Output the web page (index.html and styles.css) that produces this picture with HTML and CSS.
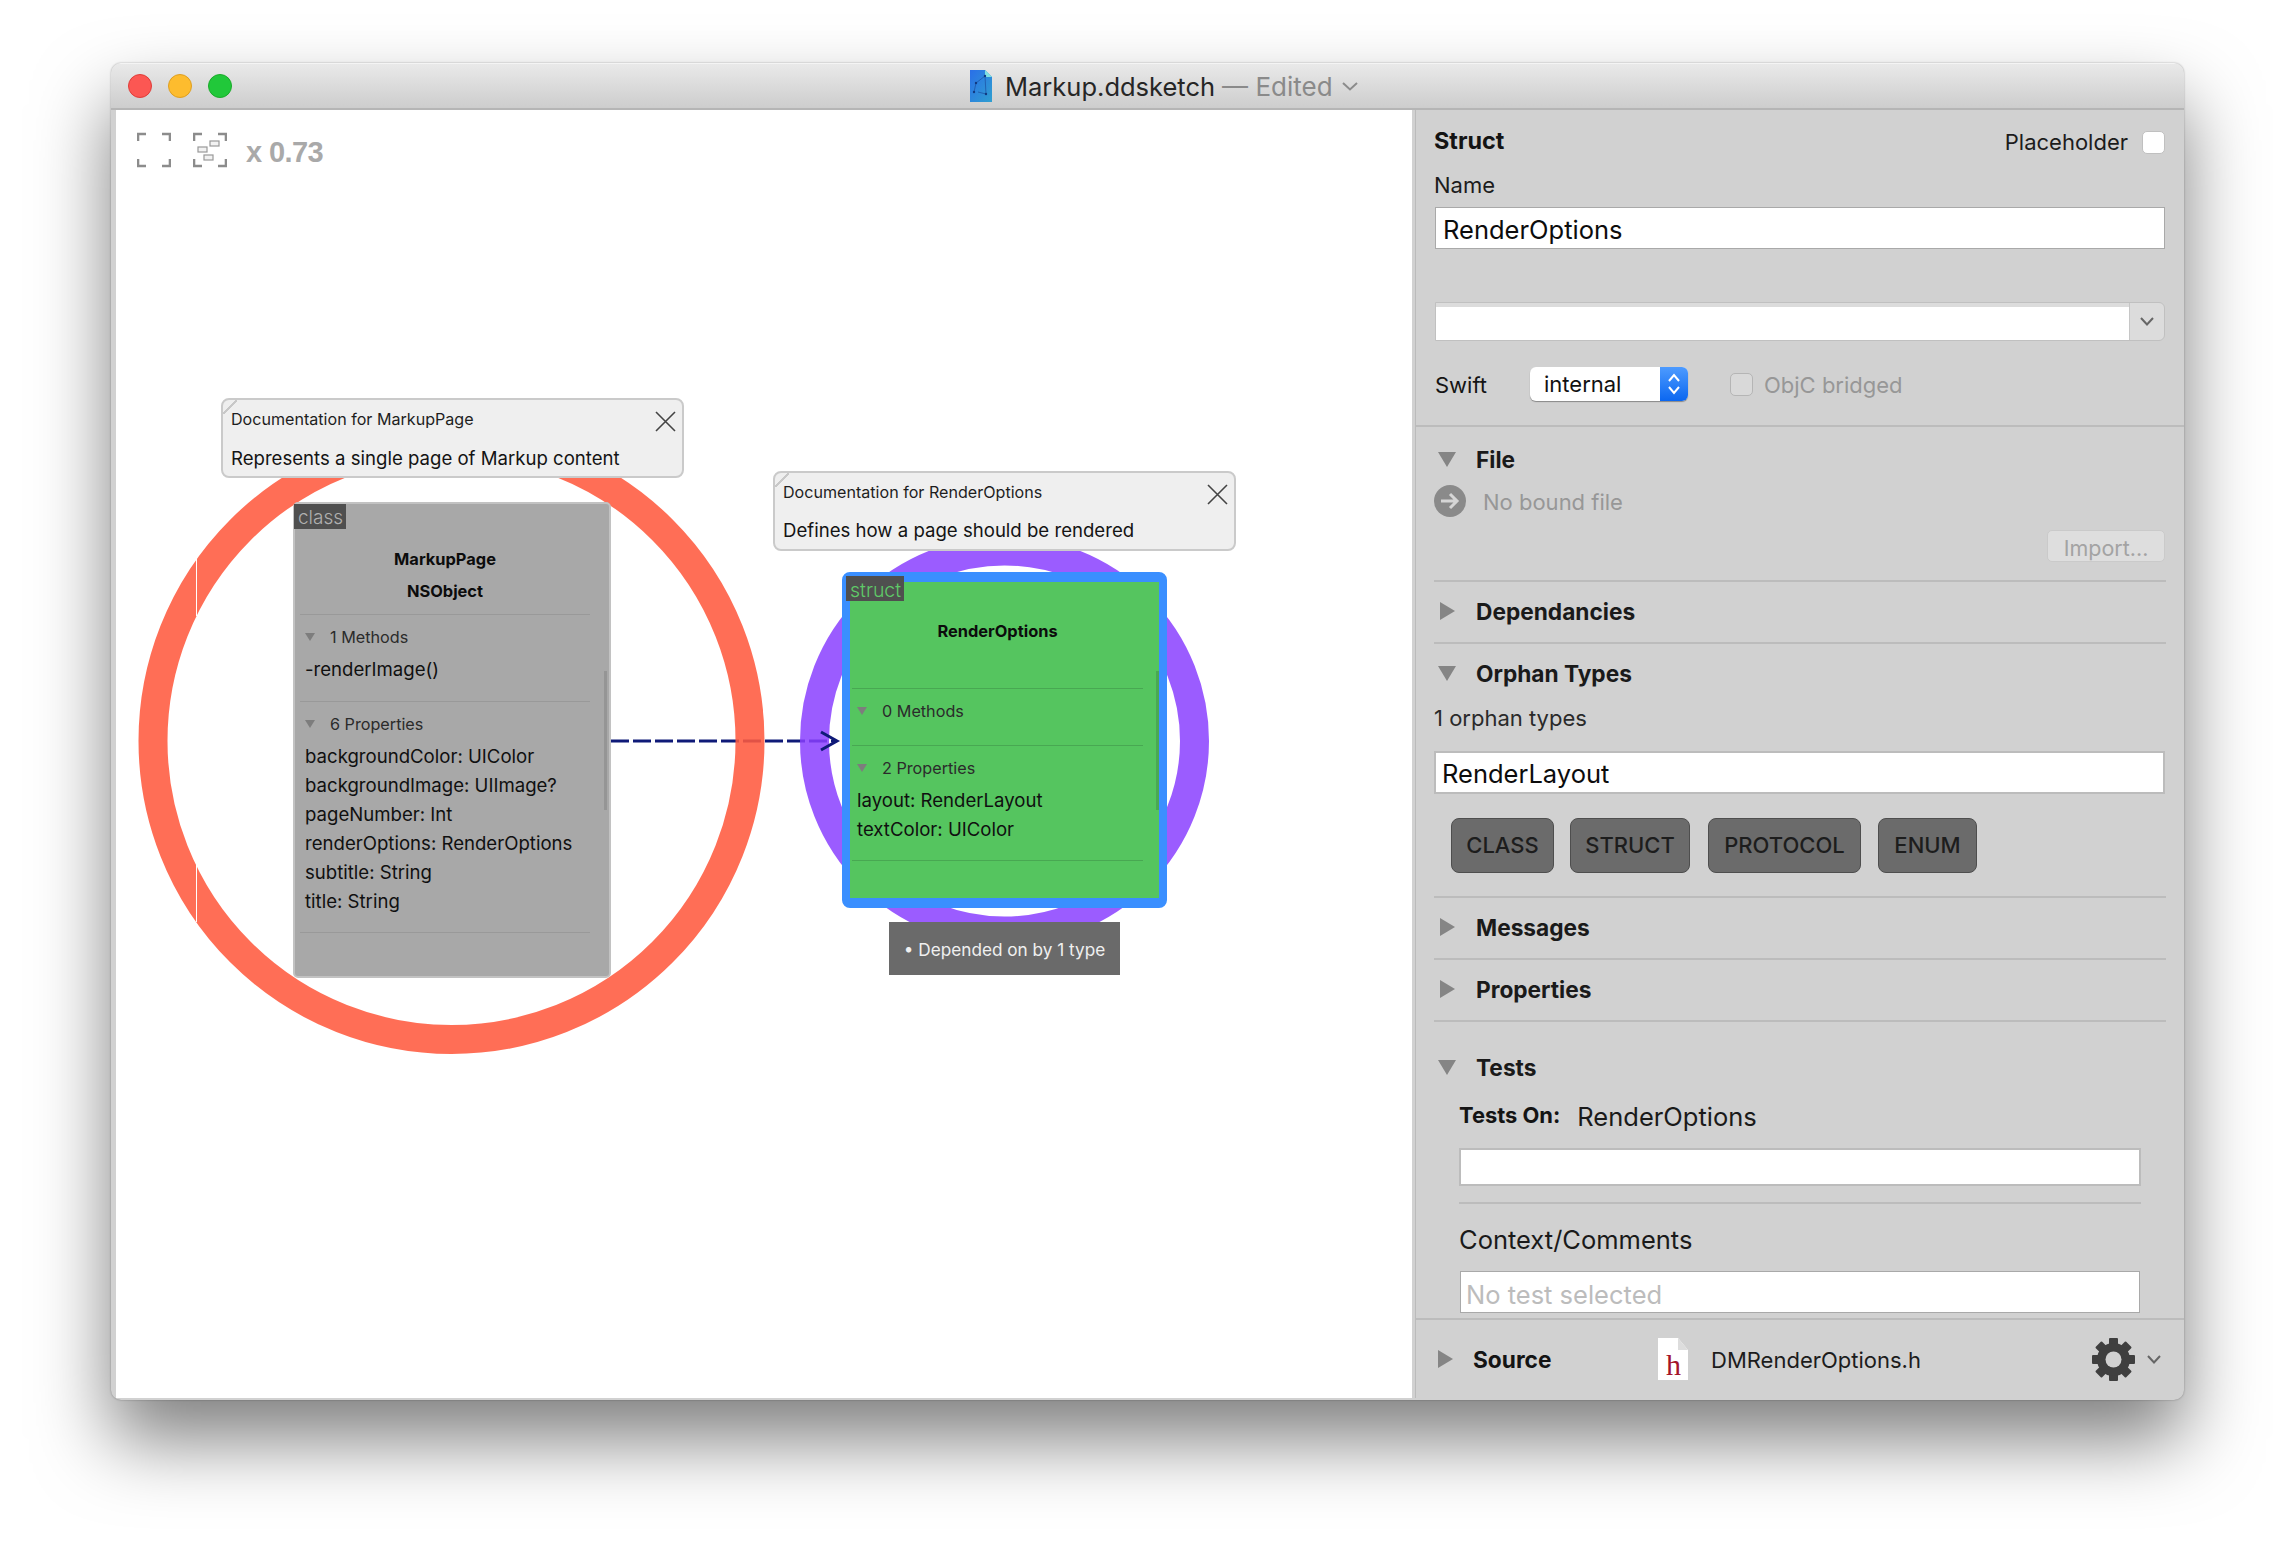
FILE: index.html
```html
<!DOCTYPE html>
<html lang="en">
<head>
    <meta charset="UTF-8">
    <title>Markup.ddsketch</title>
    <link rel="stylesheet" href="styles.css">
</head>
<body>
<div class="window">
    <div class="titlebar">
        <div class="lights">
            <span class="light red"></span>
            <span class="light yellow"></span>
            <span class="light green"></span>
        </div>
        <div class="doc-name">
            <svg class="doc-icon" width="22" height="32" viewBox="0 0 22 32">
                <defs>
                    <linearGradient id="sketch" x1="0" y1="0" x2="1" y2="1">
                        <stop offset="0" stop-color="#2a6fe8"/>
                        <stop offset="1" stop-color="#2f9fd0"/>
                    </linearGradient>
                </defs>
                <path d="M0 0H15L22 7V32H0Z" fill="url(#sketch)"/>
                <path d="M15 0L22 7H15Z" fill="#7fe0e0"/>
                <path d="M15 6L6 13L4 22M15 6L16 24L8 22" fill="none" stroke="#1b4fa0" stroke-width="0.7"/>
                <circle cx="15" cy="6" r="1.2" fill="#123a80"/>
                <circle cx="6" cy="13" r="1.2" fill="#123a80"/>
                <circle cx="4" cy="22" r="1.2" fill="#123a80"/>
                <circle cx="16" cy="24" r="1.2" fill="#123a80"/>
            </svg>
            <span class="doc-title-text">Markup.ddsketch</span>
            <span class="doc-edited">— Edited</span>
            <svg class="chev" width="16" height="9" viewBox="0 0 16 9"><path d="M1 1L8 7.5L15 1" fill="none" stroke="#8c8c8c" stroke-width="2"/></svg>
        </div>
    </div>

    <div class="main">
        <div class="canvas">
            <div class="toolbar">
                <svg width="34" height="36" viewBox="0 0 34 36" class="tool">
                    <path d="M1 9V2H9M25 2H33V9M33 27V34H25M9 34H1V27" fill="none" stroke="#8c8c8c" stroke-width="2.6"/>
                </svg>
                <svg width="34" height="36" viewBox="0 0 34 36" class="tool">
                    <path d="M1 9V2H9M25 2H33V9M33 27V34H25M9 34H1V27" fill="none" stroke="#8c8c8c" stroke-width="2.6"/>
                    <rect x="17" y="9" width="9" height="5" fill="#f2f2f2" stroke="#999" stroke-width="1.2"/>
                    <rect x="5" y="15" width="9" height="5" fill="#f2f2f2" stroke="#999" stroke-width="1.2"/>
                    <rect x="11" y="23" width="9" height="5" fill="#f2f2f2" stroke="#999" stroke-width="1.2"/>
                </svg>
                <span class="zoom-level">x 0.73</span>
            </div>

            <svg class="links" width="1296" height="1288" viewBox="0 0 1296 1288">
                <line x1="495" y1="631" x2="720" y2="631" class="link"/>
                <circle cx="335.5" cy="631" r="298.5" class="ring ring-red"/>
                <circle cx="888.5" cy="631" r="190" class="ring ring-purple"/>
                <rect x="80" y="447" width="1" height="59" fill="#fff"/>
                <rect x="80" y="754" width="1" height="58" fill="#fff"/>
                <path d="M705 622L721 631L705 640" class="link-head"/>
            </svg>

            <div class="node node-class">
                <span class="tag">class</span>
                <div class="node-title"><div>MarkupPage</div><div>NSObject</div></div>
                <div class="node-sec">
                    <div class="sec-head"><i class="tri-mini"></i>1 Methods</div>
                    <div class="member">-renderImage()</div>
                </div>
                <div class="node-sec last">
                    <div class="sec-head"><i class="tri-mini"></i>6 Properties</div>
                    <div class="member">backgroundColor: UIColor</div>
                    <div class="member">backgroundImage: UIImage?</div>
                    <div class="member">pageNumber: Int</div>
                    <div class="member">renderOptions: RenderOptions</div>
                    <div class="member">subtitle: String</div>
                    <div class="member">title: String</div>
                </div>
                <span class="node-scroll"></span>
            </div>

            <div class="node node-struct">
                <span class="tag">struct</span>
                <div class="node-title"><div>RenderOptions</div><div>&nbsp;</div></div>
                <div class="node-sec empty">
                    <div class="sec-head"><i class="tri-mini"></i>0 Methods</div>
                </div>
                <div class="node-sec last">
                    <div class="sec-head"><i class="tri-mini"></i>2 Properties</div>
                    <div class="member">layout: RenderLayout</div>
                    <div class="member">textColor: UIColor</div>
                </div>
                <span class="node-scroll"></span>
            </div>

            <div class="doc-note note-page">
                <div class="note-head">Documentation for MarkupPage</div>
                <div class="note-body">Represents a single page of Markup content</div>
                <svg class="note-close" width="21" height="21" viewBox="0 0 21 21"><path d="M1 1L20 20M20 1L1 20" stroke="#444" stroke-width="1.6"/></svg>
            </div>
            <div class="doc-note note-options">
                <div class="note-head">Documentation for RenderOptions</div>
                <div class="note-body">Defines how a page should be rendered</div>
                <svg class="note-close" width="21" height="21" viewBox="0 0 21 21"><path d="M1 1L20 20M20 1L1 20" stroke="#444" stroke-width="1.6"/></svg>
            </div>

            <div class="depends">• Depended on by 1 type</div>
        </div>

        <div class="inspector">
            <div class="head-block">
                <div class="struct-row">
                    <span class="label-bold struct-label">Struct</span>
                    <span class="placeholder-wrap">Placeholder <i class="check"></i></span>
                </div>
                <div class="label name-label">Name</div>
                <div class="field name-field">RenderOptions</div>
                <div class="combo"><div class="combo-text"></div><div class="combo-btn"><svg width="14" height="9" viewBox="0 0 14 9"><path d="M1 1L7 7.5L13 1" fill="none" stroke="#666" stroke-width="2"/></svg></div></div>
                <div class="swift-row">
                    <span class="label swift-label">Swift</span>
                    <div class="popup"><span class="popup-text">internal</span><span class="popup-btn"><svg width="14" height="24" viewBox="0 0 14 24"><path d="M2 9L7 3L12 9M2 15L7 21L12 15" fill="none" stroke="#fff" stroke-width="2"/></svg></span></div>
                    <i class="check disabled"></i>
                    <span class="label muted">ObjC bridged</span>
                </div>
            </div>

            <div class="section file-sec">
                <div class="sec-title"><i class="tri down"></i>File</div>
                <div class="bound-row">
                    <svg width="32" height="32" viewBox="0 0 32 32"><circle cx="16" cy="16" r="16" fill="#8a8a8a"/><path d="M7 16H23M16 9L23 16L16 23" fill="none" stroke="#d6d6d6" stroke-width="3"/></svg>
                    <span class="label muted">No bound file</span>
                </div>
                <div class="import-row"><span class="import-btn">Import...</span></div>
            </div>

            <div class="section"><div class="sec-title"><i class="tri right"></i>Dependancies</div></div>

            <div class="section orphan-sec">
                <div class="sec-title"><i class="tri down"></i>Orphan Types</div>
                <div class="label orphan-count">1 orphan types</div>
                <div class="field orphan-field">RenderLayout</div>
                <div class="type-btns">
                    <span class="type-btn btn-class">CLASS</span>
                    <span class="type-btn btn-struct">STRUCT</span>
                    <span class="type-btn btn-protocol">PROTOCOL</span>
                    <span class="type-btn btn-enum">ENUM</span>
                </div>
            </div>

            <div class="section"><div class="sec-title"><i class="tri right"></i>Messages</div></div>
            <div class="section"><div class="sec-title"><i class="tri right"></i>Properties</div></div>

            <div class="tests-sec">
                <div class="sec-title"><i class="tri down"></i>Tests</div>
                <div class="tests-body">
                    <div class="tests-on"><span class="label-bold small">Tests On:</span><span class="big-text">RenderOptions</span></div>
                    <div class="field tests-field"></div>
                    <div class="big-text context-label">Context/Comments</div>
                    <div class="comment-box">No test selected</div>
                </div>
            </div>

            <div class="source-bar">
                <i class="tri right"></i>
                <span class="label-bold source-label">Source</span>
                <svg class="h-icon" width="30" height="42" viewBox="0 0 30 42">
                    <path d="M0 0H20L30 12V42H0Z" fill="#fff"/>
                    <path d="M20 0L30 12H20Z" fill="#ddd"/>
                    <text x="8" y="37" class="h-letter">h</text>
                </svg>
                <span class="label source-file">DMRenderOptions.h</span>
                <svg class="gear" width="43" height="43" viewBox="0 0 43 43">
                    <g fill="#3f3f3f">
                        <rect x="17" y="0" width="9" height="43" rx="1"/>
                        <rect x="17" y="0" width="9" height="43" rx="1" transform="rotate(45 21.5 21.5)"/>
                        <rect x="17" y="0" width="9" height="43" rx="1" transform="rotate(90 21.5 21.5)"/>
                        <rect x="17" y="0" width="9" height="43" rx="1" transform="rotate(135 21.5 21.5)"/>
                    </g>
                    <circle cx="21.5" cy="21.5" r="12" fill="none" stroke="#3f3f3f" stroke-width="9"/>
                    <circle cx="21.5" cy="21.5" r="8" fill="#d1d1d1"/>
                </svg>
                <svg class="gear-chev" width="14" height="9" viewBox="0 0 14 9"><path d="M1 1L7 7.5L13 1" fill="none" stroke="#666" stroke-width="2"/></svg>
            </div>
        </div>
    </div>
</div>
</body>
</html>
```

FILE: styles.css
```css
* {
    box-sizing: border-box;
}
html, body {
    margin: 0;
    height: 1560px;
    overflow: hidden;
}
body {
    background: #fff;
    padding: 63px 0 0 111px;
    font-family: "Inter", "Liberation Sans", sans-serif;
    color: #1c1c1c;
}
i {
    font-style: normal;
}

.window {
    width: 2073px;
    height: 1337px;
    background: #d1d1d1;
    border-radius: 10px;
    overflow: hidden;
    box-shadow: 0 0 2px rgba(0, 0, 0, .35), 0 40px 75px rgba(0, 0, 0, .5);
}

/* title bar */
.titlebar {
    height: 47px;
    display: flex;
    align-items: center;
    padding-left: 17px;
    background: linear-gradient(#e9e9e9, #cdcdcd);
    border-top: 1px solid #f4f4f4;
    border-bottom: 2px solid #b5b5b5;
}
.lights {
    display: flex;
    gap: 16px;
}
.light {
    width: 24px;
    height: 24px;
    border-radius: 50%;
}
.red { background: #fc5753; border: 1px solid #df3d39; }
.yellow { background: #fdbc2e; border: 1px solid #de9f21; }
.green { background: #21c83a; border: 1px solid #1aab2a; }
.doc-name {
    display: flex;
    align-items: center;
    margin-left: 738px;
    font-size: 25.5px;
}
.doc-icon {
    margin-right: 13px;
}
.doc-title-text {
    color: #262626;
}
.doc-edited {
    color: #8a8a8a;
    margin-left: 7px;
    font-size: 26px;
}
.chev {
    margin-left: 9px;
}

.main {
    display: flex;
    height: 1288px;
    padding-left: 5px;
}

/* diagram */
.canvas {
    position: relative;
    width: 1296px;
    background: #fff;
    padding: 22px 0 0 21px;
}
.toolbar {
    display: flex;
    align-items: center;
    gap: 22px;
    height: 36px;
}
.zoom-level {
    margin: 5px 0 0 -3px;
    font-family: "Liberation Sans", sans-serif;
    font-size: 29px;
    font-weight: 700;
    letter-spacing: -.6px;
    color: #a9a9a9;
}
.links {
    position: absolute;
    left: 0;
    top: 0;
}
.link {
    stroke: #0f1a78;
    stroke-width: 3;
    stroke-dasharray: 18 4;
}
.link-head {
    fill: none;
    stroke: #0f1a78;
    stroke-width: 3;
}
.ring {
    fill: none;
    stroke-width: 29;
}
.ring-red {
    stroke: #ff5a3f;
    stroke-opacity: .88;
}
.ring-purple {
    stroke: #8a40ff;
    stroke-opacity: .85;
}

.node {
    position: absolute;
    font-size: 18.6px;
}
.node-class {
    left: 177px;
    top: 392px;
    width: 318px;
    height: 476px;
    padding: 39px 19px 0 5px;
    background: #a8a8a8;
    border: 2px solid #c2c2c2;
    border-radius: 5px;
    --sep: #999;
}
.node-struct {
    left: 726px;
    top: 462px;
    width: 325px;
    height: 336px;
    padding: 33px 16px 0 2px;
    background: #55c55f;
    border: solid #3a8fff;
    border-width: 10px 8px;
    border-radius: 8px;
    --sep: #48a852;
}
.tag {
    position: absolute;
    left: -1px;
    top: 0;
    height: 25px;
    padding: 0 3px 0 4px;
    line-height: 27px;
    font-size: 19px;
    font-weight: 300;
    background: #4f4f4f;
    color: #b0b0b0;
}
.node-struct .tag {
    left: -4px;
    top: -6px;
    font-size: 19.5px;
    line-height: 28px;
    color: #5fca68;
}
.node-title {
    padding-bottom: 7px;
    text-align: center;
    line-height: 32px;
    font-size: 16.4px;
    font-weight: 700;
    color: #0c0c0c;
}
.node-struct .node-title {
    padding-bottom: 9px;
}
.node-sec {
    border-top: 1px solid var(--sep);
    padding: 9px 0 17.5px 5px;
}
.node-sec.empty {
    padding-bottom: 21px;
}
.node-sec.last {
    border-bottom: 1px solid var(--sep);
    padding-bottom: 16.5px;
}
.sec-head {
    display: flex;
    align-items: center;
    height: 26px;
    font-size: 16.2px;
    color: #2b2b2b;
}
.tri-mini {
    width: 0;
    height: 0;
    margin-right: 15px;
    border: solid transparent;
    border-width: 8px 5px 0;
    border-top-color: #7d7d7d;
}
.member {
    height: 29px;
    line-height: 29px;
    color: #101010;
}
.sec-head + .member {
    margin-top: 4.5px;
}
.node-scroll {
    position: absolute;
    left: 309px;
    top: 167px;
    width: 3px;
    height: 139px;
    background: #959595;
}
.node-struct .node-scroll {
    left: 306px;
    top: 89px;
    width: 2.5px;
    background: #4aa853;
}

.doc-note {
    position: absolute;
    width: 463px;
    height: 80px;
    padding: 7px 0 0 8px;
    background: #efefef;
    border: 2px solid #cacaca;
    border-radius: 8px;
}
.doc-note::before {
    content: "";
    position: absolute;
    left: 0;
    top: 0;
    width: 14px;
    height: 14px;
    background: linear-gradient(135deg, transparent 46%, #c8c8c8 46%, #c8c8c8 54%, transparent 54%);
}
.note-page {
    left: 105px;
    top: 288px;
}
.note-options {
    left: 657px;
    top: 361px;
}
.note-head {
    height: 24px;
    line-height: 24px;
    font-size: 16.1px;
    color: #1e1e1e;
}
.note-body {
    margin-top: 14px;
    height: 26px;
    line-height: 26px;
    font-size: 18.6px;
    color: #141414;
}
.note-options .note-body {
    margin-top: 13px;
}
.note-close {
    position: absolute;
    right: 6px;
    top: 11px;
}
.depends {
    position: absolute;
    left: 773px;
    top: 812px;
    width: 231px;
    height: 53px;
    text-align: center;
    line-height: 55px;
    font-size: 17.2px;
    background: #6a6a6a;
    color: #f0f0f0;
}

/* inspector */
.inspector {
    width: 769px;
    margin-left: 3px;
    border-left: 1px solid #bbb;
    font-size: 22px;
}
.label {
    height: 24px;
    padding-top: 1px;
    font-size: 22px;
    line-height: 24px;
}
.label-bold {
    font-size: 22.7px;
    line-height: 24px;
    font-weight: 700;
    color: #141414;
}
.label-bold.small {
    font-size: 21.9px;
}
.struct-label {
    font-size: 23.4px;
    margin-top: -2px;
}
.muted {
    color: #979797;
}
.head-block {
    height: 317px;
    padding: 20px 19px 0 18px;
    border-bottom: 2px solid #bcbcbc;
}
.struct-row {
    display: flex;
    justify-content: space-between;
    align-items: center;
    height: 24px;
}
.placeholder-wrap {
    display: flex;
    align-items: center;
    gap: 14px;
    font-size: 22px;
}
.check {
    display: block;
    width: 23px;
    height: 23px;
    background: #fff;
    border: 1px solid #c0c0c0;
    border-radius: 5px;
}
.check.disabled {
    background: #d9d9d9;
    border-color: #b5b5b5;
    margin: 0 11px 0 42px;
}
.name-label {
    margin-top: 18px;
}
.field {
    display: flex;
    align-items: center;
    padding: 2px 0 0 7px;
    background: #fff;
    font-size: 25.5px;
    color: #0c0c0c;
}
.name-field {
    height: 42px;
    margin: 11px 0 0 1px;
    border: 1px solid #a9a9a9;
}
.combo {
    display: flex;
    height: 39px;
    margin: 53px 0 0 1px;
    border: 1px solid #c0c0c0;
    border-radius: 0 6px 6px 0;
    background: #dcdcdc;
}
.combo-text {
    flex: 1;
    margin-top: 4px;
    background: #fff;
}
.combo-btn {
    display: flex;
    align-items: center;
    justify-content: center;
    width: 35px;
    border-left: 1px solid #c6c6c6;
}
.swift-row {
    display: flex;
    align-items: center;
    height: 34px;
    margin: 26px 0 0 1px;
}
.swift-label {
    width: 95px;
    color: #141414;
}
.popup {
    display: flex;
    width: 158px;
    height: 34px;
    background: #fff;
    border-radius: 6px;
    box-shadow: 0 1px 1px rgba(0, 0, 0, .35);
    overflow: hidden;
}
.popup-text {
    flex: 1;
    padding-left: 14px;
    line-height: 35px;
    font-size: 22px;
    color: #111;
}
.popup-btn {
    display: flex;
    align-items: center;
    justify-content: center;
    width: 28px;
    background: linear-gradient(#4d9bff, #0b67f0);
}

.section {
    margin: 0 18px;
    padding: 17px 0 19px;
    border-bottom: 2px solid #bcbcbc;
}
.sec-title {
    display: flex;
    align-items: center;
    height: 24px;
    padding-top: 1px;
    font-size: 22.7px;
    font-weight: 700;
    color: #1a1a1a;
}
.sec-title .tri {
    margin-top: -1px;
}
.tri {
    display: block;
    flex: none;
    width: 0;
    height: 0;
    border: solid transparent;
}
.tri.down {
    margin-left: 4px;
    margin-right: 20px;
    border-width: 15px 9px 0;
    border-top-color: #858585;
}
.tri.right {
    margin-left: 6px;
    margin-right: 21px;
    border-width: 9px 0 9px 15px;
    border-left-color: #858585;
}
.file-sec {
    padding: 20px 0 18px;
}
.bound-row {
    display: flex;
    align-items: center;
    gap: 17px;
    height: 32px;
    margin-top: 14px;
}
.import-row {
    display: flex;
    justify-content: flex-end;
    margin: 13px 1px 0 0;
}
.import-btn {
    width: 118px;
    height: 32px;
    text-align: center;
    line-height: 34px;
    font-size: 21.5px;
    color: #a3a3a3;
    background: #dedede;
    border: 1px solid #cacaca;
    border-radius: 5px;
}
.orphan-sec {
    padding-bottom: 23px;
}
.orphan-count {
    margin-top: 20px;
    color: #2a2a2a;
}
.orphan-field {
    height: 43px;
    margin: 22px 1px 0 0;
    border: 2px solid #bcbcbc;
    padding-left: 6px;
}
.type-btns {
    display: flex;
    height: 55px;
    margin: 24px 0 0 17px;
}
.type-btn {
    height: 55px;
    text-align: center;
    line-height: 53px;
    font-size: 22px;
    font-weight: 500;
    color: #1d1d1d;
    background: #6b6b6b;
    border: 1px solid #4e4e4e;
    border-radius: 8px;
}
.btn-class { width: 103px; }
.btn-struct { width: 120px; margin-left: 16px; }
.btn-protocol { width: 153px; margin-left: 18px; }
.btn-enum { width: 99px; margin-left: 17px; }

.tests-sec {
    height: 296px;
    margin: 0 18px;
    padding-top: 33px;
}
.tests-body {
    margin: 24px 25px 0;
}
.tests-on {
    display: flex;
    align-items: center;
    height: 24px;
    gap: 17px;
}
.tests-on .big-text {
    padding-top: 2px;
}
.big-text {
    font-size: 25.5px;
    color: #1a1a1a;
}
.tests-field {
    height: 38px;
    margin-top: 21px;
    border: 2px solid #bcbcbc;
}
.context-label {
    height: 52px;
    margin-top: 16px;
    padding-top: 20px;
    line-height: 32px;
    border-top: 2px solid #bcbcbc;
}
.comment-box {
    height: 42px;
    margin: 17px 1px 0;
    padding-left: 5px;
    line-height: 45px;
    font-size: 25.5px;
    color: #bcbcbc;
    background: #fff;
    border: 1px solid #a9a9a9;
}
.source-bar {
    display: flex;
    align-items: center;
    height: 80px;
    padding-left: 16px;
    border-top: 2px solid #bcbcbc;
}
.source-label {
    width: 185px;
    margin-left: -1px;
    padding-top: 2px;
}
.h-icon {
    margin-right: 23px;
}
.h-letter {
    font-family: "Liberation Serif", serif;
    font-size: 30px;
    fill: #a3142a;
}
.source-file {
    width: 381px;
}
.gear-chev {
    margin-left: 12px;
}
```
